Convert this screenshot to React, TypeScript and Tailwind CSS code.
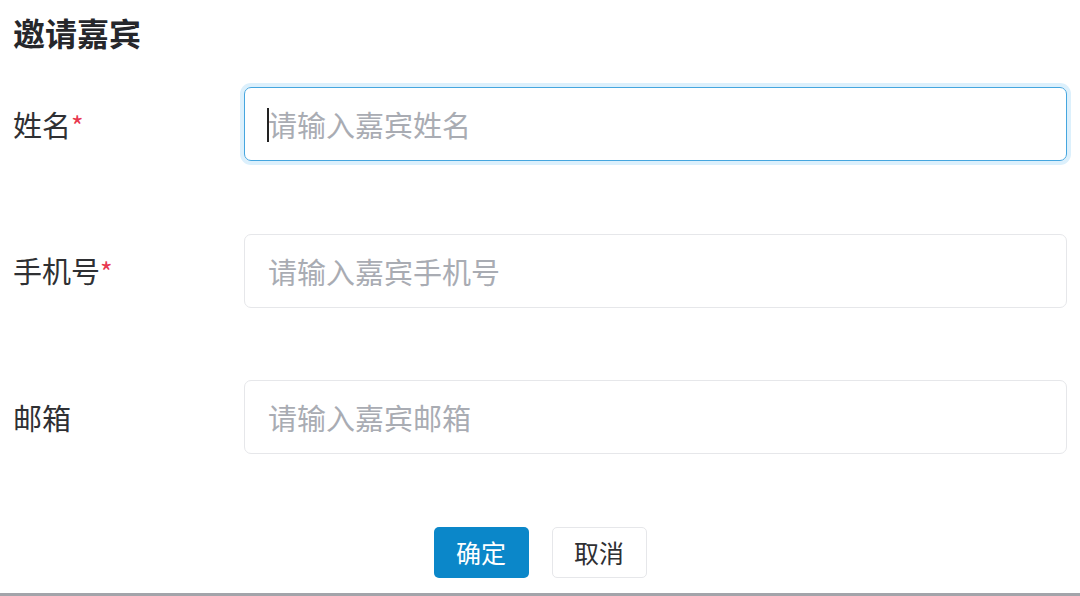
const FONT = '"Noto Sans CJK SC", "Noto Sans", sans-serif';

interface FieldProps {
  label: string;
  placeholder: string;
  required?: boolean;
  focused?: boolean;
}

function Field({ label, placeholder, required, focused }: FieldProps) {
  return (
    <div className="flex items-center h-[74px]">
      <div className="w-[231px] text-[29px] leading-none text-[#2f3033]">
        {label}
        {required && <span className="text-[#e8384f] text-[27px]">*</span>}
      </div>
      <div
        className={
          focused
            ? "relative flex-1 h-[74px] rounded-[7px] border border-[#45a6df] ring-4 ring-[#dcf0fc]"
            : "relative flex-1 h-[74px] rounded-[7px] border border-[#e6e7ea]"
        }
      >
        <input
          className="w-full h-full bg-transparent outline-none pl-[23px] text-[29px] text-[#2f3033] placeholder:text-[#a9acb3]"
          style={{ fontFamily: FONT }}
          placeholder={placeholder}
        />
        {focused && <span className="absolute left-[22px] top-[20px] w-[2px] h-[34px] bg-[#222]" />}
      </div>
    </div>
  );
}

export default function App() {
  return (
    <div
      className="w-[1080px] h-[596px] bg-white border-b-[3px] border-[#a3a4aa] flex flex-col pl-[13px] pr-[13px] pt-[12px] overflow-hidden"
      style={{ fontFamily: FONT }}
    >
      <h1 className="text-[32px] leading-[40px] font-bold text-[#26272b]">邀请嘉宾</h1>
      <div className="mt-[35px] flex flex-col gap-[72.5px]">
        <Field label="姓名" placeholder="请输入嘉宾姓名" required focused />
        <Field label="手机号" placeholder="请输入嘉宾手机号" required />
        <Field label="邮箱" placeholder="请输入嘉宾邮箱" />
      </div>
      <div className="mt-[73px] flex justify-center gap-[23px]">
        <button className="w-[95px] h-[51px] rounded-[5px] bg-[#0b87c9] text-white text-[25px]">确定</button>
        <button className="w-[95px] h-[51px] rounded-[5px] bg-white border border-[#e6e7ea] text-[#2f3033] text-[25px]">
          取消
        </button>
      </div>
    </div>
  );
}
